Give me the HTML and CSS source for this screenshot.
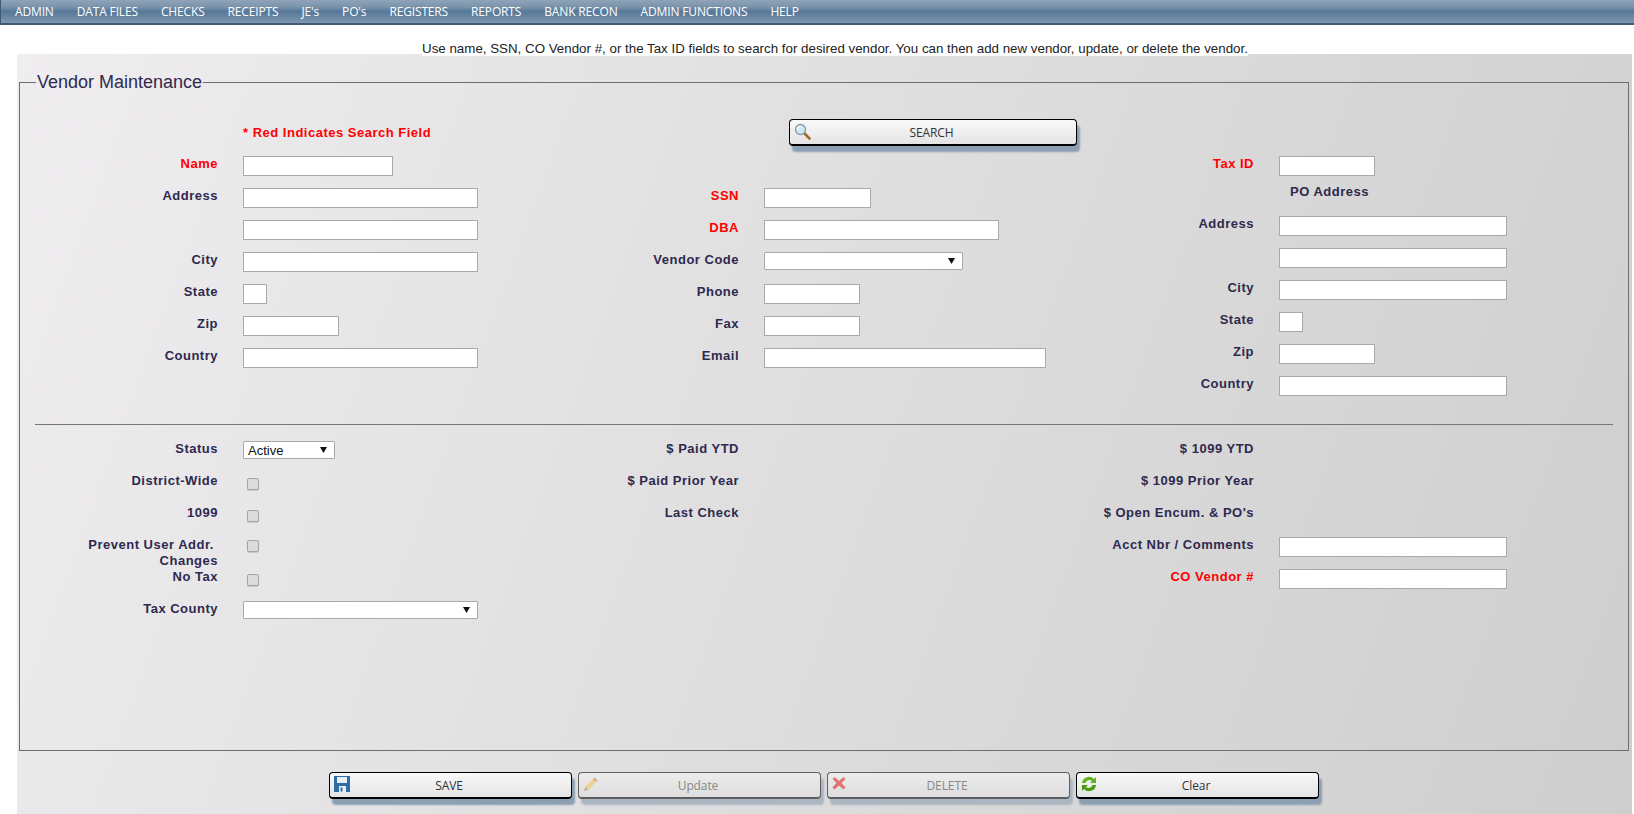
FILE: index.html
```html
<!DOCTYPE html>
<html lang="en">
<head>
    <meta charset="UTF-8">
    <title>Vendor Maintenance</title>
    <link rel="stylesheet" href="styles.css">
</head>
<body>
    <ul class="nav">
        <li>ADMIN</li>
        <li>DATA FILES</li>
        <li>CHECKS</li>
        <li>RECEIPTS</li>
        <li>JE's</li>
        <li>PO's</li>
        <li>REGISTERS</li>
        <li>REPORTS</li>
        <li>BANK RECON</li>
        <li>ADMIN FUNCTIONS</li>
        <li>HELP</li>
    </ul>
    <p class="hint"><span>Use name, SSN, CO Vendor #, or the Tax ID fields to search for desired vendor. You can then add new vendor, update, or delete the vendor.</span></p>
    <div class="panel">
        <fieldset class="box">
            <legend>Vendor Maintenance</legend>
            <div class="cols top">
                <div>
                    <div class="row"><span class="lbl"></span><span class="lbl note">* Red Indicates Search Field</span></div>
                    <div class="row"><label class="lbl red">Name</label><input class="w150"></div>
                    <div class="row"><label class="lbl">Address</label><input class="w235"></div>
                    <div class="row"><label class="lbl"></label><input class="w235"></div>
                    <div class="row"><label class="lbl">City</label><input class="w235"></div>
                    <div class="row"><label class="lbl">State</label><input class="w24"></div>
                    <div class="row"><label class="lbl">Zip</label><input class="w96"></div>
                    <div class="row"><label class="lbl">Country</label><input class="w235"></div>
                </div>
                <div>
                    <div class="row">
                        <button class="btn search" type="button">
                            <svg class="ico" width="17" height="17" viewBox="0 0 17 17">
                                <path d="M10.5 10.5l5 5" stroke="#a8672a" stroke-width="2.6" stroke-linecap="round"/>
                                <circle cx="6.5" cy="6.5" r="5" fill="#cfeaf7" stroke="#8c9ba6" stroke-width="1.3"/>
                                <path d="M3.5 6.5a3 3 0 0 1 3-3" fill="none" stroke="#fff" stroke-width="1.3"/>
                            </svg>
                            SEARCH
                        </button>
                    </div>
                    <div class="row"></div>
                    <div class="row"><label class="lbl red">SSN</label><input class="w107"></div>
                    <div class="row"><label class="lbl red">DBA</label><input class="w235"></div>
                    <div class="row"><label class="lbl">Vendor Code</label><select class="w199"><option></option></select></div>
                    <div class="row"><label class="lbl">Phone</label><input class="w96"></div>
                    <div class="row"><label class="lbl">Fax</label><input class="w96"></div>
                    <div class="row"><label class="lbl">Email</label><input class="w282"></div>
                </div>
                <div>
                    <div class="row"></div>
                    <div class="row"><label class="lbl red">Tax ID</label><input class="w96"></div>
                    <div class="po-head">PO Address</div>
                    <div class="row"><label class="lbl">Address</label><input class="w228"></div>
                    <div class="row"><label class="lbl"></label><input class="w228"></div>
                    <div class="row"><label class="lbl">City</label><input class="w228"></div>
                    <div class="row"><label class="lbl">State</label><input class="w24"></div>
                    <div class="row"><label class="lbl">Zip</label><input class="w96"></div>
                    <div class="row"><label class="lbl">Country</label><input class="w228"></div>
                </div>
            </div>
            <hr class="line">
            <div class="cols">
                <div>
                    <div class="row"><label class="lbl">Status</label><select class="w92"><option>Active</option></select></div>
                    <div class="row"><label class="lbl">District-Wide</label><input class="chk" type="checkbox" disabled></div>
                    <div class="row"><label class="lbl">1099</label><input class="chk" type="checkbox" disabled></div>
                    <div class="row"><label class="lbl">Prevent User Addr.&nbsp;<br>Changes</label><input class="chk chk2" type="checkbox" disabled></div>
                    <div class="row"><label class="lbl">No Tax</label><input class="chk" type="checkbox" disabled></div>
                    <div class="row"><label class="lbl">Tax County</label><select class="w235"><option></option></select></div>
                </div>
                <div>
                    <div class="row"><label class="lbl">$ Paid YTD</label></div>
                    <div class="row"><label class="lbl">$ Paid Prior Year</label></div>
                    <div class="row"><label class="lbl">Last Check</label></div>
                </div>
                <div>
                    <div class="row"><label class="lbl">$ 1099 YTD</label></div>
                    <div class="row"><label class="lbl">$ 1099 Prior Year</label></div>
                    <div class="row"><label class="lbl">$ Open Encum. &amp; PO's</label></div>
                    <div class="row"><label class="lbl">Acct Nbr / Comments</label><input class="w228"></div>
                    <div class="row"><label class="lbl red">CO Vendor #</label><input class="w228"></div>
                </div>
            </div>
        </fieldset>
        <div class="actions">
            <button class="btn" type="button">
                <svg class="ico" width="16" height="16" viewBox="0 0 16 16">
                    <path d="M0 0h16v16H0z" fill="#2f6ea5"/>
                    <path d="M3 1h10v6H3z" fill="#e8eef3"/>
                    <path d="M5 10h7v6H5z" fill="#e8eef3"/>
                    <path d="M6.500 11.500h2v4h-2z" fill="#2f6ea5"/>
                </svg>
                SAVE
            </button>
            <button class="btn" type="button" disabled>
                <svg class="ico" width="16" height="16" viewBox="0 0 16 16">
                    <path d="M1 15l1.200-4.500L11.500 1.500l3 3-9.200 9.200z" fill="#efc873"/>
                    <path d="M11.500 1.500l3 3-1.500 1.500-3-3z" fill="#d98a6a"/>
                    <path d="M1 15l1.200-4.500 3.100 3.200z" fill="#b9a184"/>
                </svg>
                Update
            </button>
            <button class="btn" type="button" disabled>
                <svg class="ico" width="14" height="14" viewBox="0 0 14 14">
                    <path d="M2.500 1L7 5l4.500-4L13.500 3 9.500 7l4 4.500-2 2L7 9.500l-4.500 4-2-2L4.500 7l-4-4z" fill="#e0443e"/>
                </svg>
                DELETE
            </button>
            <button class="btn" type="button">
                <svg class="ico" width="16" height="16" viewBox="0 0 16 16">
                    <path d="M1 7a7 7 0 0 1 12-4l2-2v6H9l2-2a4 4 0 0 0-6.500 2z" fill="#5fb31c"/>
                    <path d="M15 9a7 7 0 0 1-12 4l-2 2V9h6l-2 2a4 4 0 0 0 6.500-2z" fill="#4a9a12"/>
                </svg>
                Clear
            </button>
        </div>
    </div>
</body>
</html>
```

FILE: styles.css
```css
*{
    margin: 0;
    padding: 0;
    box-sizing: border-box;
}
html,body{
    height: 814px;
    overflow: hidden;
    background: #fff;
}
body{
    font-family: "Liberation Sans", Arial, sans-serif;
}
.nav{
    display: flex;
    gap: 23px;
    height: 25px;
    padding-left: 14px;
    list-style: none;
    font-family: "Open Sans", sans-serif;
    font-size: 12px;
    line-height: 23px;
    letter-spacing: -0.15px;
    color: #fff;
    border-left: 1px solid #3f5a75;
    border-bottom: 2px solid #3f5a75;
    background: linear-gradient(to bottom, #8fa4b9 0%, #7a93ab 30%, #56789a 50%, #6a87a3 75%, #7f97ae 100%);
}
.hint{
    height: 29px;
    padding: 16px 0 0 36px;
    font-size: 13.33px;
    line-height: 15px;
    text-align: center;
    color: #222;
}
.hint span{
    background: #fff;
}
.panel{
    width: 1615px;
    height: 760px;
    margin-left: 17px;
    padding-top: 18px;
    background: linear-gradient(110deg, #efedef 0%, #cfcece 100%);
}
.box{
    display: block;
    width: 1610px;
    height: 679px;
    margin-left: 2px;
    padding: 0 0 0 16px;
    border: 1px solid #6e6e6e;
}
.box legend{
    padding: 0 1px;
    font-size: 18px;
    line-height: 21px;
    color: #2d2a4e;
}
.cols{
    display: grid;
    grid-template-columns: 521px 515px 1fr;
}
.top{
    padding-top: 25px;
}
.row{
    display: flex;
    align-items: flex-start;
    height: 32px;
}
.lbl{
    flex: none;
    width: 182px;
    margin-right: 25px;
    padding-top: 6px;
    font-size: 13px;
    font-weight: bold;
    line-height: 16px;
    letter-spacing: 0.5px;
    text-align: right;
    color: #2d2a4e;
}
.red{
    color: #f00;
}
.note{
    width: auto;
    margin: 0;
    padding-top: 7px;
    text-align: left;
    color: #f00;
}
.po-head{
    height: 28px;
    padding: 2px 0 0 218px;
    font-size: 13px;
    font-weight: bold;
    line-height: 16px;
    letter-spacing: 0.5px;
    color: #2d2a4e;
}
input,select{
    flex: none;
    height: 20px;
    margin-top: 6px;
    border: 1px solid #a9a9a9;
    background-color: #fff;
    font-family: "Liberation Sans", Arial, sans-serif;
    font-size: 13px;
    color: #111;
}
select{
    appearance: none;
    height: 18px;
    padding-left: 4px;
    border-radius: 1px;
    background-image: url("data:image/svg+xml,%3Csvg xmlns='http://www.w3.org/2000/svg' width='7' height='6'%3E%3Cpath d='M0 0h7L3.500 6z' fill='%23111'/%3E%3C/svg%3E");
    background-repeat: no-repeat;
    background-position: right 7px center;
}
.w24{ width: 24px; }
.w92{ width: 92px; }
.w96{ width: 96px; }
.w107{ width: 107px; }
.w150{ width: 150px; }
.w199{ width: 199px; }
.w228{ width: 228px; }
.w235{ width: 235px; }
.w282{ width: 282px; }
.chk{
    appearance: none;
    width: 12px;
    height: 12px;
    margin: 11px 0 0 4px;
    border: 1px solid #a6a6a6;
    border-radius: 2px;
    background: #dcdbdb;
    box-shadow: 0 1px 1px #c6c6c6;
}
.chk2{
    margin-top: 9px;
}
.line{
    width: 1578px;
    height: 1px;
    margin: 22px 0 10px -1px;
    border: 0;
    background: #777;
}
.btn{
    position: relative;
    flex: none;
    width: 243px;
    height: 27px;
    padding-right: 3px;
    border: 1px solid #000;
    border-bottom-width: 2px;
    border-radius: 4px;
    background: linear-gradient(to bottom, #f9f9f9, #e4e4e4);
    box-shadow: 3px 6px 2px #8a9fb1;
    font-family: "Open Sans", sans-serif;
    font-size: 12px;
    letter-spacing: -0.1px;
    color: #333;
}
.btn[disabled]{
    border-color: #5e5e5e;
    background: linear-gradient(to bottom, #ececec, #dedede);
    box-shadow: 3px 6px 2px #aab6c1;
    color: #888;
}
.btn[disabled] .ico{
    opacity: 0.7;
}
.ico{
    position: absolute;
    top: 3px;
    left: 4px;
}
.search{
    width: 288px;
    margin: 1px 0 0 232px;
}
.actions{
    display: flex;
    gap: 6px;
    margin-top: 21px;
    padding-left: 312px;
}
```
